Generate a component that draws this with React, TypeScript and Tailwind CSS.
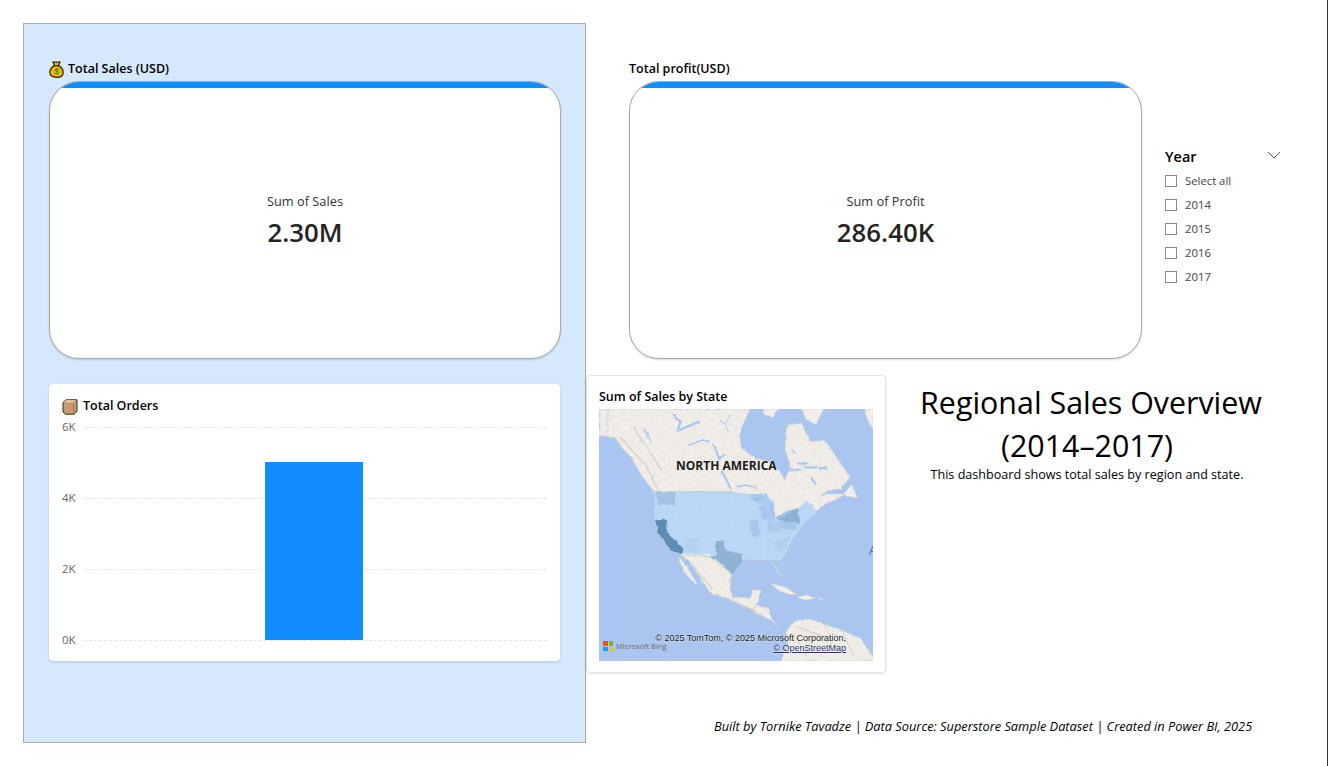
const font = { fontFamily: '"Open Sans", "Noto Sans", "Liberation Sans", sans-serif' }

const LAND =
    "M27 117H480L452 180L450 200L455 235L495 265L545 275L570 305L585 332L600 285L585 235L590 165L635 160L660 215L705 210L735 255L780 320L755 355L715 362L690 378L720 372L770 372L720 395L690 412L640 462L612 500L572 570L577 622L560 600L545 570L455 570L425 612L420 655L430 680L480 685L490 660L510 660L505 695L495 705L540 720L545 750L570 775L540 750L475 715L425 690L360 670L295 570L268 552L240 540L205 490L195 450L197 370L167 335L142 295L127 265L97 235L77 205L27 195Z"

const USA =
    "M195 365L430 365L470 372L510 395L555 412L555 445L590 422L625 415L652 390L682 425L640 462L612 500L572 570L577 622L560 600L545 570L455 570L425 612L400 585L378 570L360 555L280 552L265 552L240 540L205 490L195 450Z"

function BagIcon() {
    return (
        <svg width="15" height="17" viewBox="0 0 15 17" className="mr-[4px] shrink-0">
            <path d="M4 1.200h7L9.600 4.600c2.600 1.400 4.600 4 4.600 6.800 0 3.200-3 4.900-6.700 4.900S.8 14.600.8 11.400c0-2.800 2-5.400 4.600-6.800z" fill="#f4b400" stroke="#2b2207" strokeWidth="1.200" />
            <path d="M5 4.800h5" stroke="#2b2207" strokeWidth="1.200" />
            <text x="7.500" y="13.500" textAnchor="middle" fontSize="8" fontWeight="700" fill="#3c8a1e">$</text>
        </svg>
    )
}

function BoxIcon() {
    return (
        <svg width="16" height="16" viewBox="0 0 16 16" className="mr-[5px] shrink-0">
            <path d="M1 3.500 4 .8h11v11l-2.800 3.400H3.500L1 13z" fill="#c99a6f" stroke="#2e2a26" strokeWidth="1" />
            <path d="M1.500 3.500 11 4.200l3.500-3M11 4.200l1.200 10.600" fill="none" stroke="#8a6443" strokeWidth=".7" />
            <path d="M1.500 3.500 4.200 1h10l-3.200 3.200z" fill="#e2bd95" />
        </svg>
    )
}

function KpiCard({ title, icon, label, value, className }: { title: string; icon?: boolean; label: string; value: string; className: string }) {
    return (
        <div className={className}>
            <div className="flex h-[23px] items-center text-[12.500px] font-semibold text-black">
                {icon && <BagIcon />}
                {title}
            </div>
            <div className="flex h-[278px] flex-col overflow-hidden rounded-[30px] border border-[#a9a9a9] bg-white shadow-[0_1px_2px_rgba(0,0,0,0.15)]">
                <div className="h-[6px] bg-[#118dff]"></div>
                <div className="flex flex-col items-center pt-[105px]">
                    <div className="text-[12.800px] font-medium leading-[17px] text-[#333]">{label}</div>
                    <div className="text-[25.800px] font-semibold leading-[44px] text-[#252423]">{value}</div>
                </div>
            </div>
        </div>
    )
}

function OrdersChart() {
    const ticks = ["6K", "4K", "2K", "0K"]
    return (
        <div className="mt-[25px] h-[277px] w-[511px] rounded-[4px] bg-white px-[13px] pt-[14px] shadow-[0_1px_3px_rgba(0,0,0,0.15)]">
            <div className="flex h-[17px] items-center text-[12.500px] font-semibold text-black">
                <BoxIcon />
                Total Orders
            </div>
            <div className="relative mt-[4px] flex h-[229px] flex-col justify-between">
                {ticks.map((t) => (
                    <div key={t} className="flex h-[16px] items-center">
                        <span className="w-[22px] text-[11.500px] leading-[16px] text-[#666]">{t}</span>
                        <div className="flex-1 border-t border-dashed border-[#e6e6e6]"></div>
                    </div>
                ))}
                <div className="absolute bottom-[8px] left-[203px] h-[178px] w-[98px] bg-[#118dff]"></div>
            </div>
        </div>
    )
}

function MapDrawing() {
    return (
        <svg width="274" height="252" viewBox="27 117 822 756" className="block">
            <defs>
                <filter id="soft" x="-5%" y="-5%" width="110%" height="110%">
                    <feTurbulence type="fractalNoise" baseFrequency="0.05" numOctaves="3" seed="4" result="n" />
                    <feDisplacementMap in="SourceGraphic" in2="n" scale="9" xChannelSelector="R" yChannelSelector="G" />
                    <feGaussianBlur stdDeviation="1.600" />
                </filter>
                <filter id="mottle" x="0" y="0" width="100%" height="100%">
                    <feTurbulence type="fractalNoise" baseFrequency="0.09" numOctaves="3" seed="9" />
                    <feColorMatrix values="0 0 0 0 0.55  0 0 0 0 0.54  0 0 0 0 0.5  1.900 0 0 0 -0.800" />
                </filter>
                <clipPath id="land">
                    <path d={LAND} />
                    <path d="M600 873L590 800L610 755L650 745L740 775L810 805L849 860V873Z" />
                </clipPath>
                <clipPath id="usa">
                    <path d={USA} />
                </clipPath>
            </defs>
            <rect x="27" y="117" width="822" height="756" fill="#aac6f0" />
            <g filter="url(#soft)">
                <path d={LAND} fill="#f1eee9" stroke="#d5d2cc" strokeWidth="2" strokeLinejoin="round" />
                {/* baja, south america, arctic islands, caribbean */}
                <g fill="#f1eee9" stroke="#d5d2cc" strokeWidth="1.500">
                    <path d="M268 560L290 590L322 642L312 640L282 605L268 575Z" />
                    <path d="M572 873L595 825L588 785L610 755L650 745L740 775L810 805L849 860V873Z" />
                    <path d="M825 117H849V176L832 150Z" />
                    <path d="M635 117H700L680 165L650 150Z" />
                    <path d="M520 117H565L550 140L525 135Z" />
                    <path d="M760 372L785 345L805 385L778 380Z" />
                    <path d="M540 640L585 652L622 672L600 674L565 660Z" />
                    <path d="M622 682L650 675L677 684L645 690Z" />
                    <path d="M688 684L700 686L690 690Z" />
                </g>
                <rect x="27" y="117" width="822" height="756" filter="url(#mottle)" clipPath="url(#land)" opacity=".22" />
                {/* western ranges */}
                <path d="M90 200L170 290L205 360M130 170L215 300M300 580L370 660M420 690L500 725M620 770L700 800" stroke="#cfccc5" strokeWidth="5" fill="none" opacity=".7" />
                {/* canadian lakes */}
                <g fill="none" stroke="#aac6f0" strokeLinecap="round" strokeLinejoin="round">
                    <path d="M247 135L272 155L262 185L287 172L327 155" strokeWidth="7" />
                    <path d="M297 225L337 210L357 215" strokeWidth="5" />
                    <path d="M372 225L387 265L402 255" strokeWidth="6" />
                    <path d="M397 305L422 355" strokeWidth="6" />
                    <path d="M395 150L415 185M420 135L405 165" strokeWidth="3" />
                    <path d="M595 297L630 300M625 280L650 280M645 292H680M690 296L712 292M665 325L675 340" strokeWidth="7" />
                    <path d="M440 350L470 345L500 355M160 175L185 215M605 240L615 250" strokeWidth="4" />
                </g>
                {/* united states and state shading */}
                <path d={USA} fill="#bad8f6" />
                <rect x="27" y="117" width="822" height="756" filter="url(#mottle)" clipPath="url(#usa)" opacity=".08" />
                <path d="M470 372L530 372L555 410L500 400Z" fill="#a9cdf0" />
                <path d="M505 405L548 410L556 450L535 455L525 440L515 450Z" fill="#a9c9ee" />
                <path d="M195 365L255 365L255 405L205 405Z" fill="#a2c3e3" />
                <path d="M195 450L232 450L232 490L280 535L276 553L240 540L205 490Z" fill="#5f8cb4" />
                <path d="M378 512L402 512L402 540L455 552L456 577L425 612L400 585L378 570L355 560L378 558Z" fill="#8fb2d4" />
                <path d="M555 445L590 425L625 415L630 462L572 450Z" fill="#8eb1d3" />
                <path d="M478 455L505 448L510 490L495 505L480 480Z" fill="#a5c8ea" />
                <path d="M570 452L618 455L620 478L570 478Z" fill="#a5c8ea" />
                <path d="M533 458L570 452L570 485L535 488Z" fill="#abcdee" />
                <path d="M285 510L325 505L325 550L285 535Z" fill="#b1d2f1" />
                <path d="M545 515L600 500L575 550Z" fill="#b0d1f0" />
                <path d="M545 570L572 570L577 622Z" fill="#a9c9ec" />
                {/* great lakes */}
                <path d="M475 385L530 378L505 396Z" fill="#9fc2ea" />
                <path d="M518 405L526 445M542 402L552 438M562 445L598 426" stroke="#9fc2ea" strokeWidth="6" fill="none" />
                {/* borders */}
                <path d="M54 117V195M265 555L360 560L425 612M450 735L500 712M700 755L730 830M610 790L650 860M760 790L790 860" stroke="#c0b7aa" strokeWidth="1.500" fill="none" />
            </g>
            <path d="M195 365H430" stroke="#b9b4ab" strokeWidth="1.500" fill="none" />
            <g stroke="#ffffff" strokeWidth="1" opacity=".25" fill="none">
                <path d="M255 405V450M255 405H430M340 365V510M430 365V552M232 450H430M325 505H470M470 430V560M520 490V565" />
            </g>
        </svg>
    )
}

function MapCard() {
    return (
        <div className="h-[298px] w-[300px] rounded-[4px] border border-[#e3e3e3] bg-white px-[12px] pt-[13px] shadow-[0_1px_3px_rgba(0,0,0,0.1)]">
            <div className="h-[20px] text-[12.500px] font-semibold leading-[16px] text-black">Sum of Sales by State</div>
            <div className="relative h-[252px] w-[274px] overflow-hidden">
                <MapDrawing />
                <div className="absolute left-[77px] top-[49px] text-[12px] font-bold leading-[16px] text-[#1c1c1c]">NORTH AMERICA</div>
                <div className="absolute left-[270px] top-[134px] text-[12px] leading-[16px] text-[#3f63c4]">A</div>
                <div className="absolute bottom-[10px] left-[4px] flex items-center gap-[3px]">
                    <div className="grid h-[10px] w-[10px] grid-cols-2 gap-px">
                        <div className="bg-[#f25022]"></div>
                        <div className="bg-[#7fba00]"></div>
                        <div className="bg-[#00a4ef]"></div>
                        <div className="bg-[#ffb900]"></div>
                    </div>
                    <span className="text-[7.500px] leading-[10px] text-[#6d6d6d]">Microsoft Bing</span>
                </div>
                <div className="absolute right-[27px] top-[224px] text-right text-[9px] leading-[10px] text-[#1a1a1a] [text-shadow:0_0_2px_#fff]" style={{ fontFamily: '"Liberation Sans", sans-serif' }}>
                    <div>© 2025 TomTom, © 2025 Microsoft Corporation,</div>
                    <div className="text-[#26365f] underline">© OpenStreetMap</div>
                </div>
            </div>
        </div>
    )
}

function YearSlicer() {
    const rows = ["Select all", "2014", "2015", "2016", "2017"]
    return (
        <div className="ml-[23px] w-[116px] pt-[87px]">
            <div className="flex h-[24px] items-center justify-between">
                <span className="text-[14.500px] font-semibold text-black">Year</span>
                <svg width="14" height="8" viewBox="0 0 14 8" className="mb-[4px]">
                    <path d="M1 1l6 6 6-6" fill="none" stroke="#555" strokeWidth="1" />
                </svg>
            </div>
            <div className="flex flex-col">
                {rows.map((r) => (
                    <div key={r} className="flex h-[24px] items-center">
                        <div className="h-[12px] w-[12px] border border-[#8a8a8a]"></div>
                        <span className="ml-[8px] text-[11.300px] text-[#444]">{r}</span>
                    </div>
                ))}
            </div>
        </div>
    )
}

export default function App() {
    return (
        <div className="flex h-[766px] w-[1328px] overflow-hidden border-r border-[#333] bg-white pl-[23px] pt-[23px]" style={font}>
            <div className="h-[720px] w-[563px] shrink-0 border border-[#a6adb5] bg-[#d6e8fd] pl-[25px] pt-[34px]">
                <KpiCard className="w-[512px]" title="Total Sales (USD)" icon label="Sum of Sales" value="2.30M" />
                <OrdersChart />
            </div>
            <div className="flex flex-col">
                <div className="ml-[43px] mt-[35px] flex">
                    <KpiCard className="w-[513px]" title="Total profit(USD)" label="Sum of Profit" value="286.40K" />
                    <YearSlicer />
                </div>
                <div className="mt-[16px] flex">
                    <MapCard />
                    <div className="ml-[12px] w-[378px] text-center text-black">
                        <div className="pl-[8px] pt-[6px] text-[30.400px] leading-[43px]">Regional Sales Overview</div>
                        <div className="text-[30.400px] leading-[43px]">(2014–2017)</div>
                        <div className="-mt-[1px] text-[12.600px] leading-[18px]">This dashboard shows total sales by region and state.</div>
                    </div>
                </div>
                <div className="mt-[44px] pl-[128px] text-[12.800px] italic leading-[18px] text-black">
                    Built by Tornike Tavadze | Data Source: Superstore Sample Dataset | Created in Power BI, 2025
                </div>
            </div>
        </div>
    )
}
